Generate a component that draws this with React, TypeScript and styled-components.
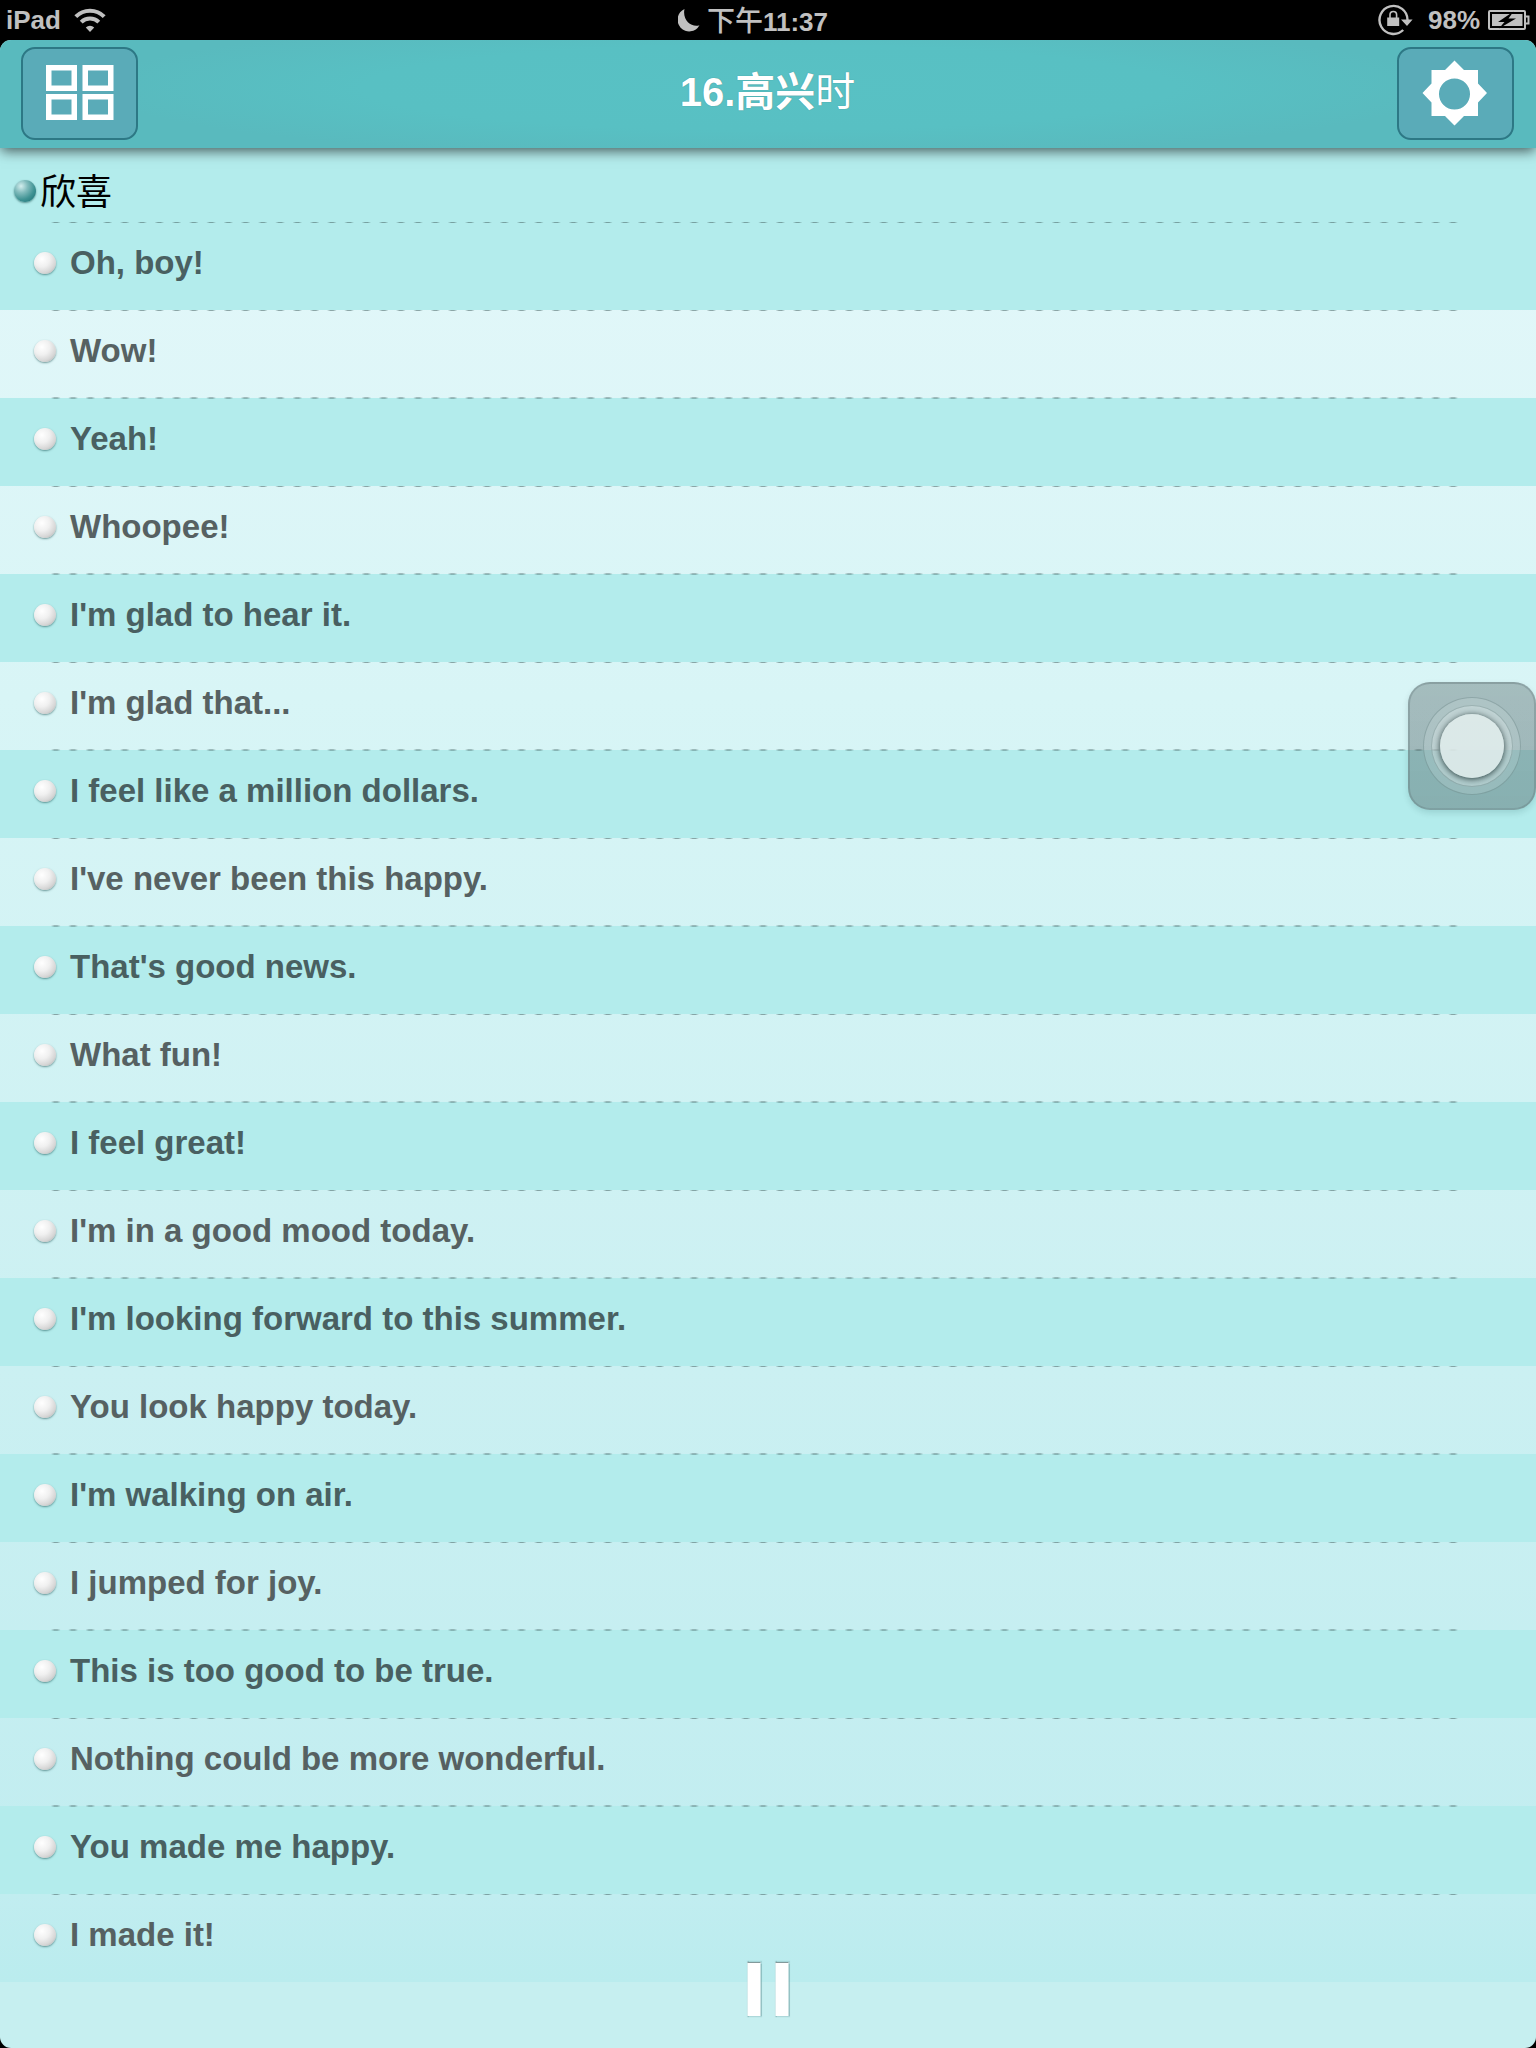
import React from "react";
import styled, { createGlobalStyle } from "styled-components";

const latin = `"Liberation Sans", Arial, "Noto Sans CJK SC", sans-serif`;

const GlobalStyle = createGlobalStyle`
  *, *::before, *::after { box-sizing: border-box; }
  body { margin: 0; background: #000; font-family: ${latin}; }
  h1, h2, ul { margin: 0; padding: 0; font-weight: 400; }
  ul { list-style: none; }
  button { padding: 0; font: inherit; cursor: pointer; }
  svg { display: block; }
`;

const Screen = styled.div`
  position: relative;
  display: flex;
  flex-direction: column;
  min-height: 100vh;
  background: #000;
`;

const StatusBar = styled.div`
  display: grid;
  grid-template-columns: 1fr auto 1fr;
  align-items: center;
  height: 40px;
  padding: 0 6px;
  color: #c0c0c0;
  font-size: 26px;
  font-weight: 700;
  line-height: 38px;
`;

const StatusGroup = styled.div<{ $end?: boolean; $gap: number }>`
  display: flex;
  align-items: center;
  justify-content: ${(p) => (p.$end ? "flex-end" : "flex-start")};
  gap: ${(p) => p.$gap}px;
  height: 36px;
`;

const Clock = styled(StatusGroup)`
  padding-right: 30px;
`;

const Cjk = styled.span<{ $size: number; $bold?: boolean }>`
  font-family: "Noto Sans CJK SC", sans-serif;
  font-size: ${(p) => p.$size}px;
  font-weight: ${(p) => (p.$bold ? 700 : 500)};
`;

const Panel = styled.main`
  display: flex;
  flex: 1;
  flex-direction: column;
  overflow: hidden;
  border-radius: 11px;
  background: #c6eff0;
`;

const Header = styled.header`
  position: relative;
  z-index: 1;
  display: flex;
  align-items: center;
  justify-content: space-between;
  height: 108px;
  padding: 0 22px 2px 21px;
  background: radial-gradient(ellipse 44% 66% at 50% 44%, #58c1c4 0%, #58c0c3 60%, #59babe 100%);
  box-shadow: 0 4px 12px -1px rgba(0, 0, 0, 0.62);
`;

const Title = styled.h1`
  padding-bottom: 6px;
  color: #fff;
  font-size: 40px;
  font-weight: 700;
  line-height: 48px;
  text-shadow: 0 0 1px rgba(0, 0, 0, 0.35);
`;

const Thin = styled.span`
  font-weight: 400;
`;

const HeaderButton = styled.button`
  display: flex;
  align-items: center;
  justify-content: center;
  width: 117px;
  height: 93px;
  border: 2px solid #2d7885;
  border-radius: 14px;
  background: #5aabb8;
`;

const dashes = `repeating-linear-gradient(
  90deg,
  transparent 0%, rgba(70, 100, 100, 0.55) 5%, rgba(70, 100, 100, 0.55) 9%,
  transparent 14%, transparent 25%
)`;

const Section = styled.h2`
  display: flex;
  align-items: center;
  gap: 4px;
  height: 74px;
  padding: 12px 14px 0;
  background: #b3ecec;
  color: #000;
  font-family: "Noto Sans CJK SC", sans-serif;
  font-size: 36px;
  font-weight: 400;
  line-height: 48px;
`;

const SectionName = styled.span`
  padding-bottom: 4px;
`;

const Phrases = styled.ul`
  background: linear-gradient(#e2f7f9 0%, #d8f5f6 27%, #cbf0f2 65%, #c1edf0 95%, #baecee 100%);
`;

const Phrase = styled.li`
  position: relative;
  display: flex;
  align-items: center;
  gap: 14px;
  height: 88px;
  padding: 0 34px 6px;
  color: #566162;
  font-size: 33px;
  font-weight: 700;
  line-height: 40px;

  &:nth-child(odd) {
    background: #b3ecec;
    color: #496061;
  }

  &::before {
    content: "";
    position: absolute;
    top: 0;
    right: 76px;
    left: 51px;
    height: 1px;
    background: ${dashes} 0 0 / 69px 100% repeat-x;
  }

  &:nth-child(odd):not(:first-child)::before {
    top: -1px;
    height: 2px;
    opacity: 0.75;
  }
`;

const Bullet = styled.span<{ $teal?: boolean }>`
  flex: none;
  width: 22px;
  height: 22px;
  border-radius: 50%;
  background: ${(p) =>
    p.$teal
      ? "radial-gradient(circle at 32% 28%, #d3eeee 0%, #82bcbd 30%, #3f9293 62%, #156a6e 100%)"
      : "radial-gradient(circle at 36% 32%, #ffffff 0%, #f0f0f0 38%, #d6d6d6 68%, #9c9c9c 100%)"};
  box-shadow: 0 1px 2px rgba(0, 60, 60, 0.5);
`;

const PauseButton = styled.button`
  position: absolute;
  bottom: 32px;
  left: 50%;
  display: flex;
  gap: 15px;
  border: 0;
  background: none;
  transform: translateX(-50%);
`;

const PauseBar = styled.span`
  width: 13px;
  height: 54px;
  border-top: 1px solid #82999a;
  background: #fff;
  box-shadow: 0 0 1px 1px rgba(100, 150, 152, 0.5);
`;

const AssistiveTouch = styled.button`
  position: absolute;
  top: 682px;
  right: 0;
  display: flex;
  align-items: center;
  justify-content: center;
  width: 128px;
  height: 128px;
  border: 2px solid rgba(90, 110, 112, 0.3);
  border-radius: 22px;
  background: linear-gradient(rgba(88, 104, 106, 0.4), rgba(76, 92, 94, 0.42));
  box-shadow: 0 3px 6px rgba(0, 60, 60, 0.14);
`;

const Ring = styled.span<{ $size: number; $alpha: number; $solid?: boolean }>`
  display: flex;
  flex: none;
  align-items: center;
  justify-content: center;
  width: ${(p) => p.$size}px;
  height: ${(p) => p.$size}px;
  border: ${(p) => (p.$solid ? "0" : "1px solid rgba(70, 100, 100, 0.3)")};
  border-radius: 50%;
  background: rgba(230, 241, 240, ${(p) => p.$alpha});
  box-shadow: ${(p) => (p.$solid ? "0 1px 6px 0 rgba(15, 35, 35, 0.85)" : "none")};
`;

const WifiIcon = () => (
  <svg width="32" height="24" viewBox="0 0 32 24" aria-label="Wi-Fi">
    <g fill="none" stroke="#c0c0c0" strokeWidth="4">
      <path d="M1.800 8.600a20 20 0 0 1 28.400 0" />
      <path d="M7.200 14.200a12.500 12.500 0 0 1 17.600 0" />
    </g>
    <path fill="#c0c0c0" d="M16 24l-4.200-4.600a6 6 0 0 1 8.400 0z" />
  </svg>
);

const MoonIcon = () => (
  <svg width="22" height="24" viewBox="0 0 22 24" aria-label="Do not disturb">
    <path fill="#c0c0c0" d="M6.500 1A11.700 11.700 0 1 0 21.500 17.300C14 20 4 12.500 6.500 1z" />
  </svg>
);

const LockIcon = () => (
  <svg width="35" height="32" viewBox="0 0 35 32" aria-label="Rotation lock">
    <path fill="none" stroke="#c0c0c0" strokeWidth="2.400" d="M25.200 26A14 14 0 1 1 29.500 16" />
    <path fill="#c0c0c0" d="M23 15.500h11.600L29 22zM9.200 13.500h12v8.400h-12z" />
    <path fill="none" stroke="#c0c0c0" strokeWidth="1.600" d="M12 14v-3.200a3.300 3.300 0 0 1 6.600 0V14" />
  </svg>
);

const BatteryIcon = () => (
  <svg width="42" height="22" viewBox="0 0 42 22" aria-label="Charging">
    <rect x="1" y="2" width="36" height="18" rx="1" fill="none" stroke="#c0c0c0" strokeWidth="2" />
    <path fill="none" stroke="#c0c0c0" strokeWidth="2" d="M37.500 7.500h3v7h-3" />
    <path fill="#c0c0c0" d="M4 5h30.500v12H4z" />
    <path fill="#000" d="M25.500 2.500L10 13H16.500L11 19.500L28 9.500H20.500z" />
  </svg>
);

const GridIcon = () => (
  <svg width="68" height="56" viewBox="0 0 68 56" aria-hidden="true">
    <g fill="none" stroke="#fff" strokeWidth="5.500">
      <rect x="2.750" y="2.750" width="25.500" height="20.500" />
      <rect x="39.250" y="2.750" width="25.500" height="20.500" />
      <rect x="2.750" y="31.750" width="25.500" height="20.500" />
      <rect x="39.250" y="31.750" width="25.500" height="20.500" />
    </g>
  </svg>
);

const GearIcon = () => (
  <svg width="66" height="66" viewBox="0 0 66 66" aria-hidden="true">
    <path
      fill="#fff"
      fillRule="evenodd"
      d="M32.500 .5L42 10H56v13.500L65 33L56 42.500V56H42L32.500 65.500L23 56H9.500V42.500L.5 33L9.500 23.500V10H23zM32.500 18.500a15.500 15.500 0 1 0 0 31a15.500 15.500 0 1 0 0-31z"
    />
  </svg>
);

const phrases = [
  "Oh, boy!",
  "Wow!",
  "Yeah!",
  "Whoopee!",
  "I'm glad to hear it.",
  "I'm glad that...",
  "I feel like a million dollars.",
  "I've never been this happy.",
  "That's good news.",
  "What fun!",
  "I feel great!",
  "I'm in a good mood today.",
  "I'm looking forward to this summer.",
  "You look happy today.",
  "I'm walking on air.",
  "I jumped for joy.",
  "This is too good to be true.",
  "Nothing could be more wonderful.",
  "You made me happy.",
  "I made it!",
];

export default function App() {
  return (
    <>
      <GlobalStyle />
      <Screen>
        <StatusBar>
          <StatusGroup $gap={13}>
            <span>iPad</span>
            <WifiIcon />
          </StatusGroup>
          <Clock $gap={7}>
            <MoonIcon />
            <span>
              <Cjk $size={28}>下午</Cjk>11:37
            </span>
          </Clock>
          <StatusGroup $gap={8} $end>
            <LockIcon />
            <StatusGroup $gap={8}>
              <span>&nbsp;98%</span>
              <BatteryIcon />
            </StatusGroup>
          </StatusGroup>
        </StatusBar>
        <Panel>
          <Header>
            <HeaderButton type="button" aria-label="Contents">
              <GridIcon />
            </HeaderButton>
            <Title>
              16.
              <Cjk $size={40} $bold>
                高兴
              </Cjk>
              <Thin>时</Thin>
            </Title>
            <HeaderButton type="button" aria-label="Settings">
              <GearIcon />
            </HeaderButton>
          </Header>
          <Section>
            <Bullet $teal />
            <SectionName>欣喜</SectionName>
          </Section>
          <Phrases>
            {phrases.map((text) => (
              <Phrase key={text}>
                <Bullet />
                {text}
              </Phrase>
            ))}
          </Phrases>
        </Panel>
        <AssistiveTouch type="button" aria-label="AssistiveTouch">
          <Ring $size={98} $alpha={0.16}>
            <Ring $size={82} $alpha={0.34}>
              <Ring $size={64} $alpha={0.72} $solid />
            </Ring>
          </Ring>
        </AssistiveTouch>
        <PauseButton type="button" aria-label="Pause">
          <PauseBar />
          <PauseBar />
        </PauseButton>
      </Screen>
    </>
  );
}
